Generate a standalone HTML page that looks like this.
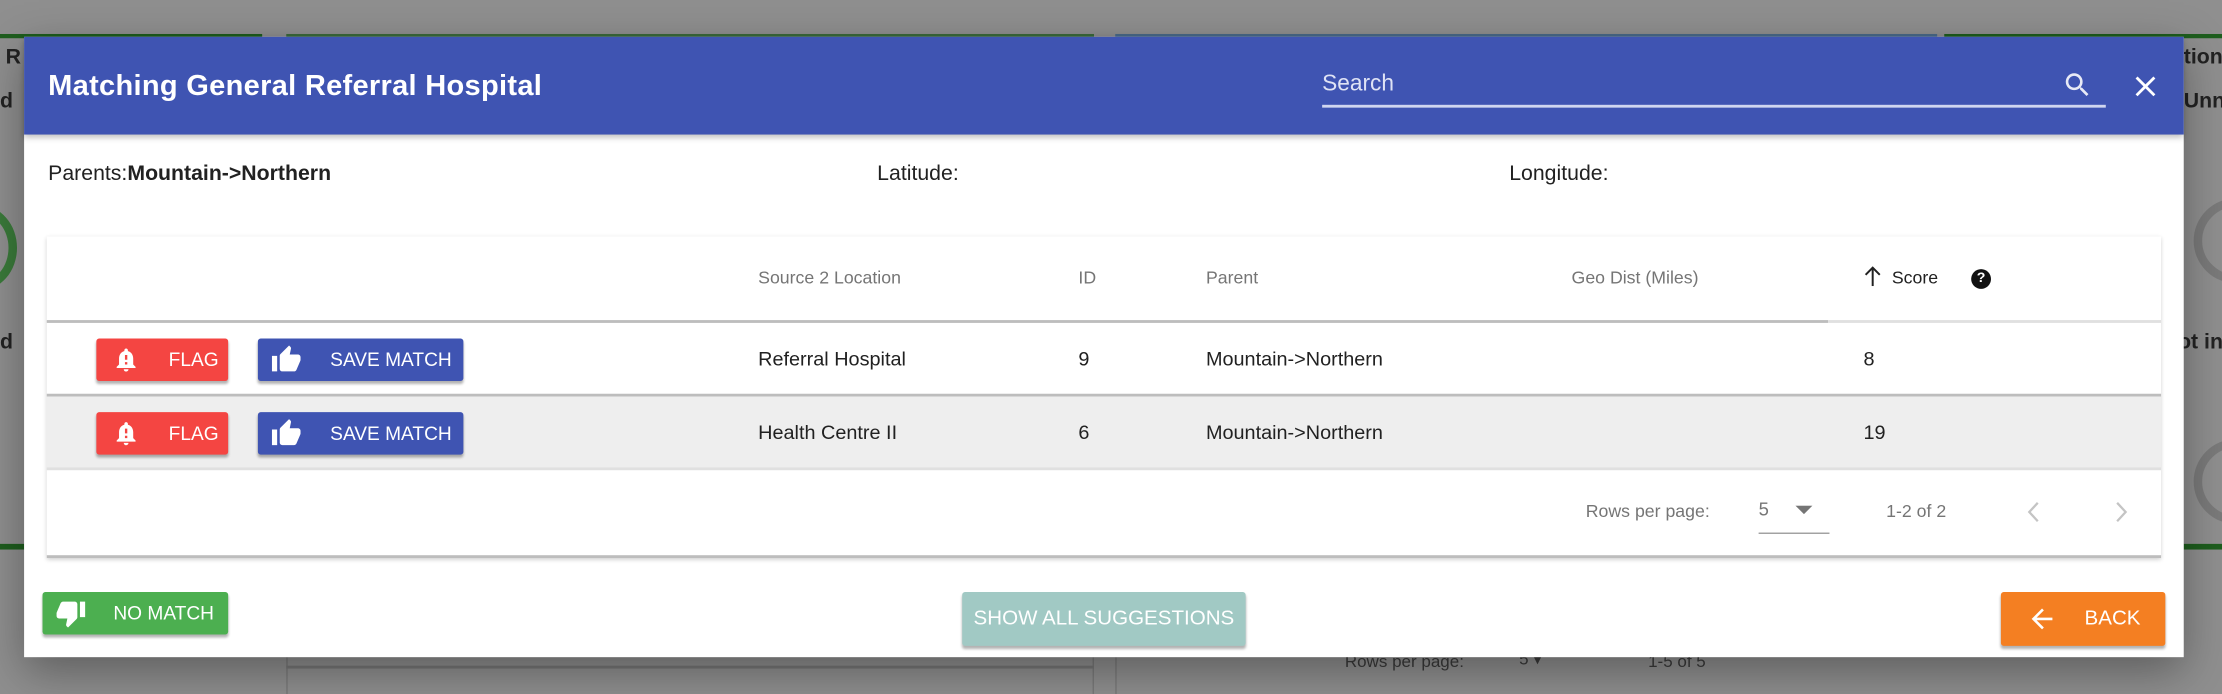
<!DOCTYPE html>
<html><head><meta charset="utf-8"><style>
*{margin:0;padding:0;box-sizing:border-box}
html,body{width:2222px;height:694px;overflow:hidden;background:#8f8f8f;font-family:"Liberation Sans",sans-serif}
#w{position:absolute;left:0;top:0;width:1568px;height:490px;transform-origin:0 0;transform:scale(1.41709,1.41633)}
.a{position:absolute}
.t{position:absolute;white-space:nowrap;line-height:1}
.btn{position:absolute;border-radius:2px;color:#fff;font-size:13.5px;box-shadow:0 2px 2px rgba(0,0,0,.3)}
.btn span{position:absolute;top:50%;transform:translateY(-50%);white-space:nowrap}
.hd{color:#757575;font-size:12.5px}
.cell{color:#212121;font-size:14px}
</style></head><body><div id="w">
<div class="a" style="left:0;top:0;width:1568px;height:490px;background:#8f8f8f"></div>
<div class="a" style="left:0;top:24px;width:185px;height:3px;background:#1e5e1e"></div>
<div class="a" style="left:202px;top:24px;width:570px;height:3px;background:#3b6b3b"></div>
<div class="a" style="left:787px;top:24px;width:580px;height:3px;background:#4a6b8a"></div>
<div class="a" style="left:1372px;top:24px;width:196px;height:3px;background:#1e5e1e"></div>
<div class="a" style="left:0;top:384px;width:17px;height:4px;background:#1e5e1e"></div>
<div class="a" style="left:1541px;top:384px;width:27px;height:4px;background:#1e5e1e"></div>
<div class="a" style="left:202px;top:464px;width:570px;height:26px;border-left:1px solid #7a7a7a;border-right:1px solid #7a7a7a"></div>
<div class="a" style="left:202px;top:470px;width:570px;height:2px;background:#777"></div>
<div class="a" style="left:787px;top:464px;width:1px;height:26px;background:#7a7a7a"></div>
<div class="t" style="left:949px;top:461px;font-size:12px;color:#3a3a3a">Rows per page:</div>
<div class="t" style="left:1072px;top:459px;font-size:12px;color:#3a3a3a">5 &#9662;</div>
<div class="t" style="left:1163px;top:461px;font-size:12px;color:#3a3a3a">1-5 of 5</div>
<div class="t" style="left:4px;top:33px;font-size:15px;font-weight:bold;color:#222">R</div>
<div class="t" style="left:0;top:64px;font-size:15px;font-weight:bold;color:#222">d</div>
<div class="t" style="left:0;top:234px;font-size:15px;font-weight:bold;color:#222">d</div>
<div class="t" style="left:1541px;top:33px;font-size:15px;font-weight:bold;color:#222">tion</div>
<div class="t" style="left:1541px;top:64px;font-size:15px;font-weight:bold;color:#222">Unn</div>
<div class="t" style="left:1537px;top:234px;font-size:15px;font-weight:bold;color:#222">ot in</div>
<div class="a" style="left:-40px;top:145px;width:52px;height:60px;border:6px solid #3a7a3a;border-radius:50%"></div>
<div class="a" style="left:1548px;top:140px;width:60px;height:60px;border:6px solid #7a7a7a;border-radius:50%"></div>
<div class="a" style="left:1548px;top:310px;width:60px;height:60px;border:6px solid #7a7a7a;border-radius:50%"></div>

<div class="a" style="left:17px;top:26px;width:1524px;height:438px;background:#fff;box-shadow:0 10px 30px rgba(0,0,0,.35)"></div>
<div class="a" style="left:17px;top:26px;width:1524px;height:69px;background:#3f54b2;box-shadow:0 2px 4px rgba(0,0,0,.25)"></div>
<div class="t" style="left:34px;top:51px;font-size:20.5px;font-weight:bold;color:#fff;letter-spacing:0.2px">Matching General Referral Hospital</div>
<div class="t" style="left:933px;top:52px;font-size:16px;color:#dfe3f5">Search</div>
<div class="a" style="left:933px;top:74px;width:553px;height:2px;background:#d0d6f0"></div>
<svg class="a" style="left:1455px;top:49px" width="22" height="22" viewBox="0 0 24 24"><path fill="#e8eaf6" d="M15.5 14h-.79l-.28-.27A6.47 6.47 0 0016 9.5 6.5 6.5 0 109.5 16c1.61 0 3.09-.59 4.23-1.57l.27.28v.79l5 4.99L20.49 19l-4.99-5zm-6 0C7.01 14 5 11.99 5 9.5S7.01 5 9.5 5 14 7.01 14 9.5 11.99 14 9.5 14z"/></svg>
<svg class="a" style="left:1502px;top:49px" width="24" height="24" viewBox="0 0 24 24"><path fill="#fff" d="M19 6.41L17.59 5 12 10.59 6.41 5 5 6.41 10.59 12 5 17.59 6.41 19 12 13.41 17.59 19 19 17.59 13.41 12z"/></svg>

<div class="t" style="left:34px;top:115px;font-size:15px;color:#212121">Parents:<b>Mountain-&gt;Northern</b></div>
<div class="t" style="left:619px;top:115px;font-size:15px;color:#212121">Latitude:</div>
<div class="t" style="left:1065px;top:115px;font-size:15px;color:#212121">Longitude:</div>

<div class="a" style="left:33px;top:167px;width:1492px;height:227px;background:#fff;box-shadow:0 1px 3px rgba(0,0,0,.2)"></div>
<div class="t hd" style="left:535px;top:190px">Source 2 Location</div>
<div class="t hd" style="left:761px;top:190px">ID</div>
<div class="t hd" style="left:851px;top:190px">Parent</div>
<div class="t hd" style="left:1109px;top:190px">Geo Dist (Miles)</div>
<svg class="a" style="left:1315px;top:188px" width="13" height="14" viewBox="0 0 13 14"><path d="M6.5 1v13M1.5 6l5-5 5 5" stroke="#212121" stroke-width="1.4" fill="none"/></svg>
<div class="t" style="left:1335px;top:190px;font-size:12.5px;color:#212121">Score</div>
<div class="a" style="left:1391px;top:190px;width:14px;height:14px;border-radius:50%;background:#111;color:#fff;font-size:10px;font-weight:bold;text-align:center;line-height:14px">?</div>
<div class="a" style="left:33px;top:226px;width:1257px;height:2px;background:#bdbdbd"></div>
<div class="a" style="left:1290px;top:226px;width:235px;height:2px;background:#e0e0e0"></div>

<div class="a" style="left:33px;top:278px;width:1492px;height:2px;background:#bdbdbd"></div>
<div class="a" style="left:33px;top:280px;width:1492px;height:50px;background:#eeeeee"></div>
<div class="a" style="left:33px;top:330px;width:1492px;height:2px;background:#e0e0e0"></div>

<div class="btn" style="left:68px;top:239px;width:93px;height:30px;background:#f44542">
<svg class="a" style="left:11px;top:5px" width="20" height="20" viewBox="0 0 24 24"><path fill="#fff" d="M12 22c1.1 0 2-.9 2-2h-4c0 1.1.9 2 2 2zm6-6v-5c0-3.07-1.63-5.64-4.5-6.32V4c0-.83-.67-1.5-1.5-1.5s-1.5.67-1.5 1.5v.68C7.64 5.36 6 7.92 6 11v5l-2 2v1h16v-1l-2-2zm-5 0h-2v-2h2v2zm0-4h-2V8h2v4z"/></svg>
<span style="left:51px">FLAG</span></div>
<div class="btn" style="left:182px;top:239px;width:145px;height:30px;background:#3f54b2">
<svg class="a" style="left:8px;top:4px" width="24" height="22" viewBox="0 0 24 24"><path fill="#fff" d="M1 21h4V9H1v12zm22-11c0-1.1-.9-2-2-2h-6.31l.95-4.57.03-.32c0-.41-.17-.79-.44-1.06L14.17 1 7.59 7.59C7.22 7.95 7 8.45 7 9v10c0 1.1.9 2 2 2h9c.83 0 1.54-.5 1.84-1.22l3.02-7.05c.09-.23.14-.47.14-.73v-2z"/></svg>
<span style="left:51px">SAVE MATCH</span></div>
<div class="btn" style="left:68px;top:291px;width:93px;height:30px;background:#f44542">
<svg class="a" style="left:11px;top:5px" width="20" height="20" viewBox="0 0 24 24"><path fill="#fff" d="M12 22c1.1 0 2-.9 2-2h-4c0 1.1.9 2 2 2zm6-6v-5c0-3.07-1.63-5.64-4.5-6.32V4c0-.83-.67-1.5-1.5-1.5s-1.5.67-1.5 1.5v.68C7.64 5.36 6 7.92 6 11v5l-2 2v1h16v-1l-2-2zm-5 0h-2v-2h2v2zm0-4h-2V8h2v4z"/></svg>
<span style="left:51px">FLAG</span></div>
<div class="btn" style="left:182px;top:291px;width:145px;height:30px;background:#3f54b2">
<svg class="a" style="left:8px;top:4px" width="24" height="22" viewBox="0 0 24 24"><path fill="#fff" d="M1 21h4V9H1v12zm22-11c0-1.1-.9-2-2-2h-6.31l.95-4.57.03-.32c0-.41-.17-.79-.44-1.06L14.17 1 7.59 7.59C7.22 7.95 7 8.45 7 9v10c0 1.1.9 2 2 2h9c.83 0 1.54-.5 1.84-1.22l3.02-7.05c.09-.23.14-.47.14-.73v-2z"/></svg>
<span style="left:51px">SAVE MATCH</span></div>

<div class="t cell" style="left:535px;top:246px">Referral Hospital</div>
<div class="t cell" style="left:761px;top:246px">9</div>
<div class="t cell" style="left:851px;top:246px">Mountain-&gt;Northern</div>
<div class="t cell" style="left:1315px;top:246px">8</div>
<div class="t cell" style="left:535px;top:298px">Health Centre II</div>
<div class="t cell" style="left:761px;top:298px">6</div>
<div class="t cell" style="left:851px;top:298px">Mountain-&gt;Northern</div>
<div class="t cell" style="left:1315px;top:298px">19</div>

<div class="t" style="left:1119px;top:355px;font-size:12.5px;color:#757575">Rows per page:</div>
<div class="t" style="left:1241px;top:353px;font-size:13px;color:#757575">5</div>
<svg class="a" style="left:1267px;top:357px" width="12" height="7"><path d="M0 0h12L6 6z" fill="#757575"/></svg>
<div class="a" style="left:1241px;top:376px;width:50px;height:1px;background:#9e9e9e"></div>
<div class="t" style="left:1331px;top:355px;font-size:12.5px;color:#757575">1-2 of 2</div>
<svg class="a" style="left:1430px;top:354px" width="10" height="15"><path d="M8 1L2 7.5 8 14" stroke="#c4c4c4" stroke-width="1.6" fill="none"/></svg>
<svg class="a" style="left:1492px;top:354px" width="10" height="15"><path d="M2 1l6 6.5L2 14" stroke="#c4c4c4" stroke-width="1.6" fill="none"/></svg>
<div class="a" style="left:33px;top:392px;width:1492px;height:2px;background:#bdbdbd"></div>

<div class="btn" style="left:30px;top:418px;width:131px;height:30px;background:#4caf50">
<svg class="a" style="left:8px;top:4px" width="24" height="22" viewBox="0 0 24 24"><path fill="#fff" d="M15 3H6c-.83 0-1.54.5-1.84 1.22l-3.02 7.05c-.09.23-.14.47-.14.73v2c0 1.1.9 2 2 2h6.31l-.95 4.57-.03.32c0 .41.17.79.44 1.06L9.830 23l6.59-6.59c.36-.36.58-.86.58-1.41V5c0-1.1-.9-2-2-2zm4 0v12h4V3h-4z"/></svg>
<span style="left:50px">NO MATCH</span></div>
<div class="btn" style="left:679px;top:418px;width:200px;height:38px;background:#a1c9c4;font-size:14.5px">
<span style="left:0;width:200px;text-align:center">SHOW ALL SUGGESTIONS</span></div>
<div class="btn" style="left:1412px;top:418px;width:116px;height:38px;background:#f47f22;font-size:14.5px">
<svg class="a" style="left:18px;top:8px" width="22" height="22" viewBox="0 0 24 24"><path fill="#fff" d="M20 11H7.830l5.59-5.59L12 4l-8 8 8 8 1.41-1.41L7.83 13H20v-2z"/></svg>
<span style="left:59px">BACK</span></div>
</div></body></html>
